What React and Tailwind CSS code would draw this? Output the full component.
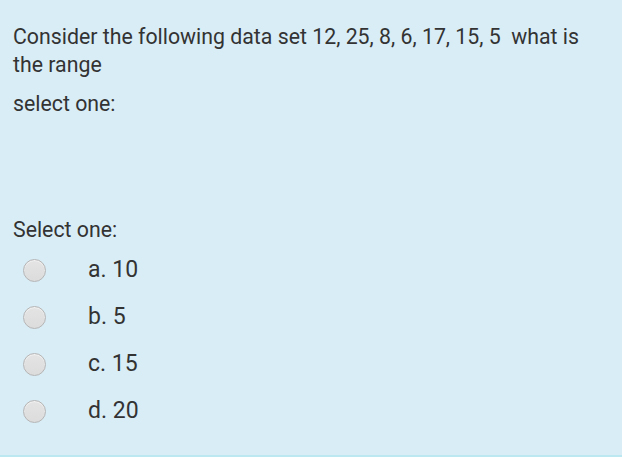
import React from 'react'

const options = ['a. 10', 'b. 5', 'c. 15', 'd. 20']

const Radio = () => (
  <span className="block w-[23px] h-[23px] rounded-full border border-[#b5b5b5] bg-gradient-to-b from-[#e4e4e4] to-[#dcdcdc] shadow-[inset_0_1px_1px_rgba(255,255,255,0.6)]" />
)

const App = () => {
  return (
    <div className="w-[622px] h-[469px] bg-white" style={{ fontFamily: 'Roboto, "Liberation Sans", sans-serif' }}>
      <div className="h-[457px] bg-[#d9edf7] border-b-2 border-[#bce8f1] pl-[13px] pr-4 pt-[23px] text-[#333333]">
        <p className="text-[21.3px] leading-[28px] pr-[20px]">
          Consider the following data set 12, 25, 8, 6, 17, 15, 5&nbsp; what is the range
        </p>
        <p className="text-[21.3px] leading-[28px] mt-[11px]">select one:</p>

        <p className="text-[21.3px] leading-[28px] mt-[98px]">Select one:</p>
        <div className="mt-[3px]">
          {options.map(opt => (
            <label key={opt} className="flex items-center h-[47px] pl-[10px]">
              <Radio />
              <span className="ml-[42px] text-[23px] text-[#333333]">{opt}</span>
            </label>
          ))}
        </div>
      </div>
    </div>
  )
}

export default App
